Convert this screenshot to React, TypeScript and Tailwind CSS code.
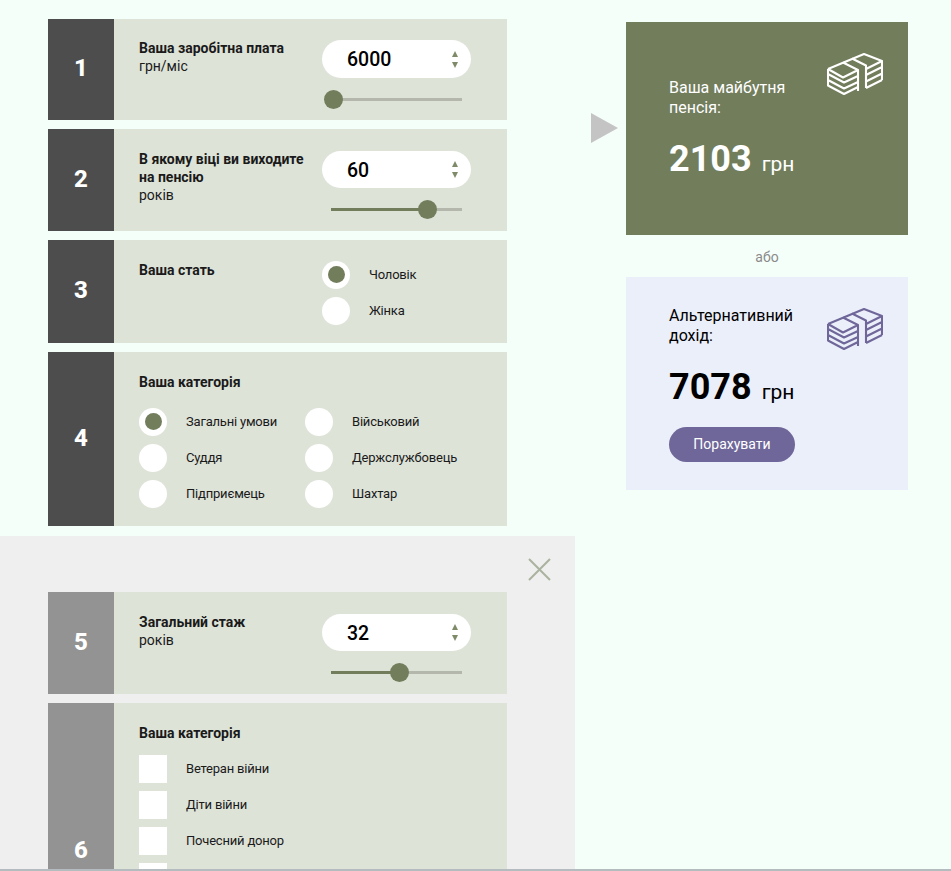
function MoneyIcon({ className }: { className: string }) {
  return (
    <svg viewBox="0 0 56 43" fill="none" stroke="currentColor" strokeWidth="2.1" strokeLinejoin="round" className={className}>
      <path d="M1 16 37 1 55 8 39 16" />
      <path d="M16 9.5 31 17 16 24.5 1 16" />
      <path d="M25 5.5 39 12.5V35" />
      <path d="M1 16 1 21 17 29.5 31 23M1 21 1 27 17 35.5 31 29M1 27 1 32.5 17 41 31 34" />
      <path d="M31 17V38" />
      <path d="M55 8V27M55 14 39 22M55 20.5 39 28.5M55 27 39 35" />
    </svg>
  )
}

function NumberCell({ n, muted }: { n: number; muted?: boolean }) {
  return (
    <div
      className={`flex w-[66px] shrink-0 items-center justify-center pb-[3px] text-[24px] font-extrabold text-white ${muted ? 'bg-[#939393]' : 'bg-[#4d4d4d]'}`}
    >
      {n}
    </div>
  )
}

function Spinner({ value, percent, compact }: { value: number; percent: number; compact?: boolean }) {
  return (
    <div className="w-[149px] shrink-0">
      <div
        className={`flex items-center justify-between rounded-full bg-white pl-[25px] pr-[13px] text-[19.5px] font-medium text-black ${compact ? 'h-[37px]' : 'h-[38px]'}`}
      >
        <span className="pt-[2px]">{value}</span>
        <span className="flex flex-col gap-[5px]">
          <span className="h-0 w-0 border-x-[3px] border-b-[6px] border-x-transparent border-b-[#7f8a68]" />
          <span className="h-0 w-0 border-x-[3px] border-t-[6px] border-x-transparent border-t-[#7f8a68]" />
        </span>
      </div>
      <div className="relative ml-[9px] mt-[20px] h-[3px] w-[131px] bg-[#b3b7ac]">
        <div className="h-full bg-[#727d5c]" style={{ width: `${percent}%` }} />
        <div
          className="absolute top-[-8px] ml-[-10px] h-[19px] w-[19px] rounded-full bg-[#727d5c]"
          style={{ left: `${percent}%` }}
        />
      </div>
    </div>
  )
}

function Radio({ label, checked }: { label: string; checked?: boolean }) {
  return (
    <div className="flex h-[29px] items-center gap-[19px]">
      <span className="flex h-[28px] w-[28px] items-center justify-center rounded-full bg-white">
        {checked && <span className="h-[17px] w-[17px] rounded-full bg-[#727d5c]" />}
      </span>
      <span className="text-[13px] tracking-[-0.2px] text-[#1a1a1a]">{label}</span>
    </div>
  )
}

function Check({ label }: { label: string }) {
  return (
    <div className="flex h-[28px] items-center gap-[19px]">
      <span className="h-[28px] w-[28px] bg-white" />
      <span className="text-[13px] tracking-[-0.2px] text-[#1a1a1a]">{label}</span>
    </div>
  )
}

function SliderRow({ n, title, unit, value, percent, muted, first }: { n: number; title: string; unit: string; value: number; percent: number; muted?: boolean; first?: boolean }) {
  return (
    <div className={`flex w-[459px] bg-[#dee3d8] ${first ? 'h-[101px]' : 'h-[102px]'}`}>
      <NumberCell n={n} muted={muted} />
      <div className={`flex flex-1 justify-between pl-[25px] pr-[36px] ${first ? 'pt-[21px]' : 'pt-[22px]'}`}>
        <div className="mt-[-1px] w-[170px] text-[14px] leading-[18px] text-[#1a1a1a]">
          <div className="font-bold">{title}</div>
          <div>{unit}</div>
        </div>
        <Spinner value={value} percent={percent} compact={!first} />
      </div>
    </div>
  )
}

function App() {
  return (
    <div className="flex h-[871px] overflow-hidden border-b-2 border-[#b4bcc0] bg-[#f5fffa] font-['Roboto',sans-serif]">
      <div className="w-[575px] shrink-0">
        <div className="flex flex-col gap-[9px] pb-[10px] pl-[48px] pt-[19px]">
          <SliderRow first n={1} title="Ваша заробітна плата" unit="грн/міс" value={6000} percent={2} />
          <SliderRow n={2} title="В якому віці ви виходите на пенсію" unit="років" value={60} percent={74} />
          <div className="flex h-[103px] w-[459px] bg-[#dee3d8]">
            <NumberCell n={3} />
            <div className="flex flex-1 pl-[25px] pt-[20px]">
              <div className="w-[183px] pt-px text-[14px] font-bold leading-[18px] text-[#1a1a1a]">Ваша стать</div>
              <div className="flex flex-col gap-[7px]">
                <Radio label="Чоловік" checked />
                <Radio label="Жінка" />
              </div>
            </div>
          </div>
          <div className="flex h-[174px] w-[459px] bg-[#dee3d8]">
            <NumberCell n={4} />
            <div className="flex-1 pl-[25px] pt-[21px]">
              <div className="text-[14px] font-bold leading-[18px] text-[#1a1a1a]">Ваша категорія</div>
              <div className="mt-[16px] grid w-[320px] grid-cols-[166px_1fr] gap-y-[7px]">
                <Radio label="Загальні умови" checked />
                <Radio label="Військовий" />
                <Radio label="Суддя" />
                <Radio label="Держслужбовець" />
                <Radio label="Підприємець" />
                <Radio label="Шахтар" />
              </div>
            </div>
          </div>
        </div>
        <div className="h-[400px] bg-[#efefef]">
          <div className="flex justify-end pr-[24px] pt-[22px] text-[#aab3a0]">
            <svg viewBox="0 0 23 23" fill="none" stroke="currentColor" strokeWidth="2" className="h-[23px] w-[23px]">
              <path d="M1 1 22 22M22 1 1 22" />
            </svg>
          </div>
          <div className="mt-[11px] flex flex-col gap-[9px] pl-[48px]">
            <SliderRow n={5} title="Загальний стаж" unit="років" value={32} percent={53} muted />
            <div className="flex h-[297px] w-[459px] bg-[#dee3d8]">
              <NumberCell n={6} muted />
              <div className="flex-1 pl-[25px] pt-[21px]">
                <div className="text-[14px] font-bold leading-[18px] text-[#1a1a1a]">Ваша категорія</div>
                <div className="mt-[13px] flex flex-col gap-[8px]">
                  <Check label="Ветеран війни" />
                  <Check label="Діти війни" />
                  <Check label="Почесний донор" />
                  <Check label="" />
                </div>
              </div>
            </div>
          </div>
        </div>
      </div>
      <div className="flex items-start">
        <div className="ml-[16px] mt-[113px] h-0 w-0 border-y-[15px] border-l-[27px] border-y-transparent border-l-[#c4c4c4]" />
        <div className="ml-[8px] mt-[22px] w-[282px]">
          <div className="relative h-[213px] bg-[#727d5c] pl-[43px] pt-[56px] text-white">
            <MoneyIcon className="absolute right-[25px] top-[31px] h-[43px] w-[56px]" />
            <div className="w-[160px] text-[16px] leading-[20px]">Ваша майбутня пенсія:</div>
            <div className="mt-[14px] flex items-baseline gap-[10px]">
              <span className="text-[36px] font-bold">2103</span>
              <span className="text-[21px]">грн</span>
            </div>
          </div>
          <div className="flex h-[42px] items-center justify-center pt-[2px] text-[14px] text-[#8a8a8a]">або</div>
          <div className="relative h-[213px] bg-[#ebeffa] pl-[43px] pt-[29px] text-black">
            <MoneyIcon className="absolute right-[25px] top-[31px] h-[43px] w-[56px] text-[#6f6799]" />
            <div className="w-[160px] text-[16px] leading-[20px]">Альтернативний дохід:</div>
            <div className="mt-[14px] flex items-baseline gap-[10px]">
              <span className="text-[36px] font-bold">7078</span>
              <span className="text-[21px]">грн</span>
            </div>
            <div className="mt-[13px] flex h-[35px] w-[126px] items-center justify-center rounded-full bg-[#6f6799] text-[14px] text-white">
              Порахувати
            </div>
          </div>
        </div>
      </div>
    </div>
  )
}

export default App
